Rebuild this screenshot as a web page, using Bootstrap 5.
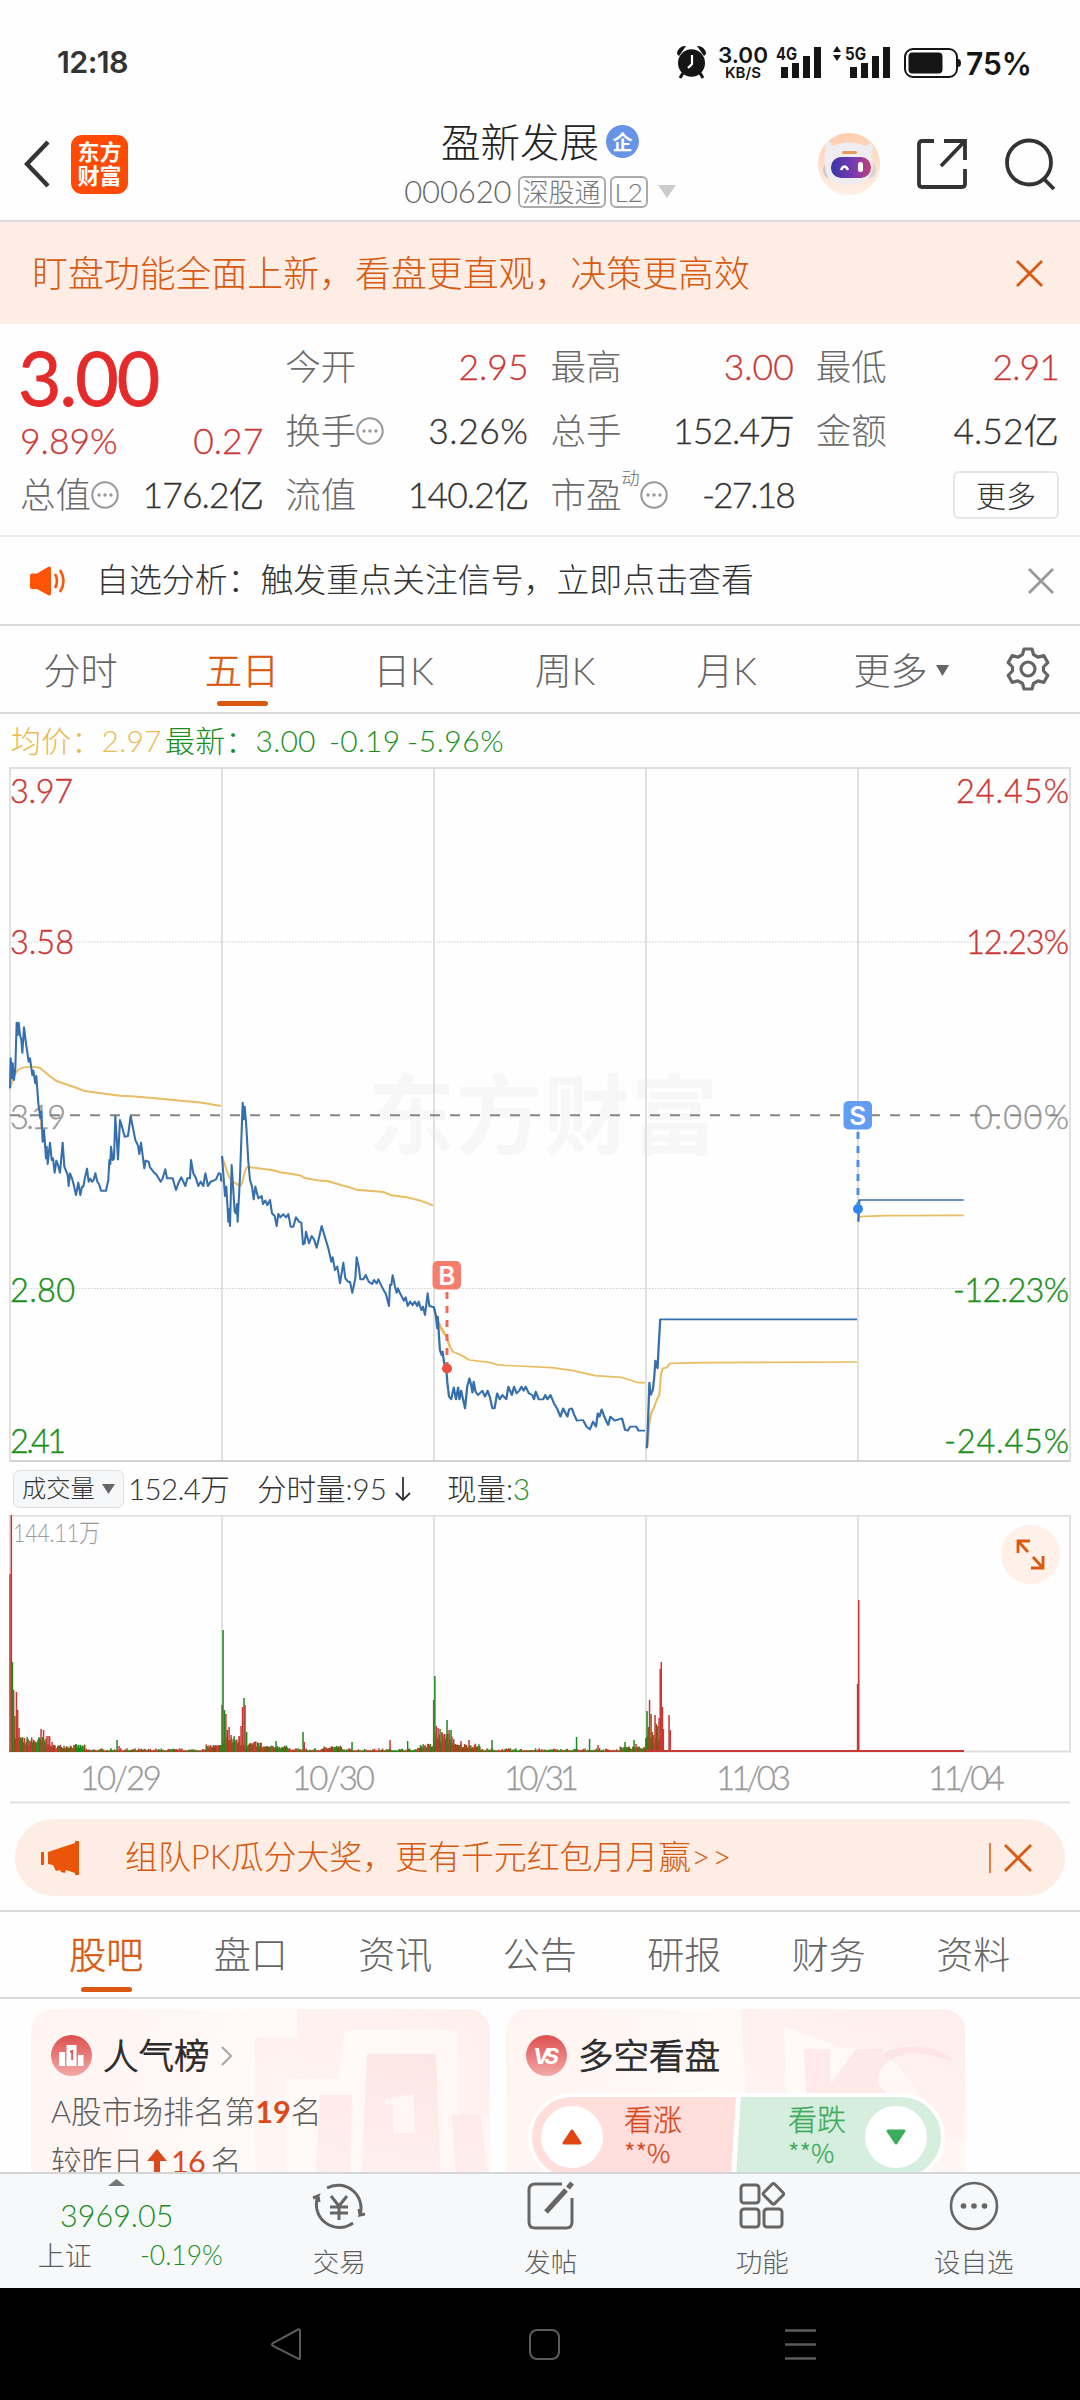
<!DOCTYPE html>
<html lang="zh-CN">
<head>
<meta charset="utf-8">
<meta name="viewport" content="width=device-width, initial-scale=1">
<title>盈新发展 000620</title>
<link rel="stylesheet" href="https://cdn.jsdelivr.net/npm/bootstrap@5.3.0/dist/css/bootstrap.min.css">
<style>
:root{--up:#cb3836;--down:#1a8f1a;--brand:#d8590f;--ink:#333;--soft:#666;--rule:#d8d8d8}
body{width:1080px;height:2400px;margin:0;overflow:hidden;background:#fefefe;color:var(--ink);font-family:Lato,"Noto Sans CJK SC",sans-serif;font-weight:300;line-height:1}
svg{display:block;flex:none}
svg text{font-family:Lato,"Noto Sans CJK SC",sans-serif;font-weight:300}
.c-up{color:var(--up)}.c-down{color:var(--down)}.c-brand{color:var(--brand)}.c-soft{color:var(--soft)}
.statusbar{height:124px;padding:0 46px 0 57px}
.clock{font:600 30.5px/1 Inter,sans-serif;letter-spacing:-.6px}
.topbar{height:98px;border-bottom:2px solid #d9dbd8;padding:0 24px 16px}
.side-l,.side-r{width:240px}
.app-logo{width:57px;height:59px;border-radius:11px;background:#ff4a05;color:#fff;font-weight:700;font-size:22px;line-height:24px;margin-left:21px}
.stock-name{font-size:39.5px;height:44px;color:#222}
.corp{width:33px;height:33px;border-radius:50%;background:#6794e6;color:#fff;font-size:20px;font-weight:700;margin-left:7px}
.stock-code{font-size:31px;height:34px;color:#666;gap:6px;letter-spacing:-.1px;margin-top:11px}
.tagbox{border:2px solid #aaa;border-radius:6px;height:32px;padding:0 3px;font-size:26px;color:#777;letter-spacing:0}
.tip{height:102px;background:#fdede4;padding:2px 36px 0 32px;font-size:35.9px}
.quote{height:213px;padding:11px 21px 0 20px;gap:22px;font-size:35.5px;border-bottom:2px solid #ececec}
.qcol{width:243.3px}
.qrow{height:64px}
.qrow .c-soft{color:#6b6b6b}
.num{font-size:35.5px;-webkit-text-stroke:.3px currentColor}
.tight{letter-spacing:-.9px}
.bigprice{font-size:75px;font-weight:400;color:#e42a2a;height:84px;letter-spacing:-2px;margin-left:-2px;-webkit-text-stroke:.8px #e42a2a}
.more-btn{width:106px;height:48px;border:2px solid #e6e6e6;border-radius:6px;font-size:30px}
.notice{height:89px;padding:0 26px 0 28px;border-bottom:2px solid var(--rule);font-size:32.9px}
.ktabs{height:88px;border-bottom:2px solid var(--rule);font-size:37px;color:#666}
.ktab{width:162px;height:88px;margin-left:-.5px}
.on{color:var(--brand);-webkit-text-stroke:.5px var(--brand)}
.ktabs .on::after,.ntabs .on::after{content:"";position:absolute;bottom:8px;left:50%;width:51px;height:5px;margin-left:-25px;border-radius:3px;background:var(--brand)}
.legend-row{height:53px;padding:0 0 2px 11px;font-size:30px;white-space:pre;letter-spacing:.2px}
.vhead{height:53px;padding-left:13px;font-size:29.5px}
.chip{width:111px;height:38px;background:#f6f7f9;border:1px solid #dedfe2;border-radius:7px;font-size:24.3px;padding-left:8px;margin-right:4px}
.promo{margin:15px 15px 14px;height:77px;border-radius:39px;background:#fdede4;font-size:32.9px;padding:0 32px 0 25px}
.ntabs{height:89px;border-top:2px solid var(--rule);border-bottom:2px solid var(--rule);padding:0 34px;font-size:37px;color:#666}
.ntab{width:144.5px}
.ntabs .on::after{bottom:5px}
.feed{height:173px;overflow:hidden;padding:10px 0 0 31px;gap:16px}
.fcard{width:459px;height:230px;border-radius:22px;background:linear-gradient(110deg,#fff4f2,#fffaf8 50%,#fff6f4);overflow:hidden;padding:26px 20px}
.fcard>svg.deco{position:absolute;left:0;top:0}
.ftitle{font-size:35.5px;color:#2b2b2b;height:41px;gap:11px;-webkit-text-stroke:.9px #2b2b2b}
.fline{font-size:30.7px;color:#5d5d5d;height:50px}
.fline b{color:#dc4a1b;font-weight:700}
.poll{width:417px;height:88px;border:4px solid #fff;border-radius:46px;margin:17px 0 0 2px;overflow:hidden;background:linear-gradient(93.5deg,#ffdedb 0 203px,#fff 204px 208px,#d6eedd 209px)}
.dot-c{width:62px;height:62px;border-radius:50%;background:#fff}
.vote{font-size:29px;line-height:32px;-webkit-text-stroke:.3px currentColor}
.vote-pct{font-family:"Noto Sans CJK SC",sans-serif;font-size:26px;display:block;line-height:32px}
.toolbar{height:116px;background:#f6f8fa;border-top:2px solid #d3d5d9;font-size:26.5px;color:#5d5d5d}
.tool{width:211.5px;padding-top:7px;gap:18px}
.index-box{width:233.5px;padding-top:5px}
.sysnav{height:112px;background:#000}
</style>
</head>
<body>
<header class="statusbar d-flex align-items-center justify-content-between">
  <span class="clock">12:18</span>
  <svg width="360" height="44" viewBox="674 40 360 44" fill="#151515">
    <path d="M677 54a8 8 0 0 1 9-8l-7 10zM706 54a8 8 0 0 0-9-8l7 10z"/><ellipse cx="691.500" cy="63" rx="13.500" ry="13.800"/><path d="M683 73l-3 5M700 73l3 5" stroke="#151515" stroke-width="3"/><path d="M692 55v9l-4 4" stroke="#fff" stroke-width="2.200" fill="none"/>
    <text x="718" y="62.500" font-size="22" textLength="50" lengthAdjust="spacingAndGlyphs" style="font-family:Inter;font-weight:600">3.00</text><text x="725" y="77.500" font-size="15" textLength="36" lengthAdjust="spacingAndGlyphs" style="font-family:Inter;font-weight:600">KB/S</text><text x="776" y="60" font-size="17" textLength="21" lengthAdjust="spacingAndGlyphs" style="font-family:Inter;font-weight:700">4G</text><text x="845" y="60" font-size="17" textLength="21" lengthAdjust="spacingAndGlyphs" style="font-family:Inter;font-weight:700">5G</text><text x="966" y="74.500" font-size="31" textLength="66" lengthAdjust="spacingAndGlyphs" style="font-family:Inter;font-weight:600">75%</text>
    <path d="M781 67h7v11h-7zM792 63h7v15h-7zM803 56h7v22h-7zM814 47h7v31h-7zM850 67h7v11h-7zM861 63h7v15h-7zM872 56h7v22h-7zM883 47h7v31h-7z"/>
    <path d="M833 52l4-6 4 6zM833 55l4 6 4-6z"/>
    <rect x="905" y="49" width="52" height="28" rx="8" fill="none" stroke="#151515" stroke-width="2"/><rect x="908.500" y="52.500" width="34" height="21" rx="4"/><path d="M958 59q3 0 3 4t-3 4z"/>
  </svg>
</header>

<nav class="topbar d-flex align-items-center justify-content-between">
  <div class="side-l d-flex align-items-center">
    <svg width="26" height="48" viewBox="0 0 26 48" fill="none" stroke="#333" stroke-width="4.400"><path d="M24 2L3 24l21 22"/></svg>
    <div class="app-logo d-flex flex-column align-items-center justify-content-center"><span>东方</span><span>财富</span></div>
  </div>
  <div class="d-flex flex-column align-items-center">
    <div class="stock-name d-flex align-items-center">盈新发展<span class="corp d-flex align-items-center justify-content-center">企</span></div>
    <div class="stock-code d-flex align-items-center">000620<span class="tagbox d-flex align-items-center">深股通</span><span class="tagbox d-flex align-items-center" style="margin-left:-2px">L2</span>
      <svg class="ms-1" width="18" height="13" viewBox="0 0 18 13"><path d="M0 0h18L9 13z" fill="#ccc"/></svg></div>
  </div>
  <div class="side-r d-flex align-items-center justify-content-end">
    <svg width="62" height="62" viewBox="0 0 62 62">
      <defs><linearGradient id="rb" x2="0" y2="1"><stop stop-color="#ffcdb0"/><stop offset="1" stop-color="#fff0e7"/></linearGradient><linearGradient id="rf"><stop stop-color="#3b35a8"/><stop offset=".6" stop-color="#7d3bb0"/><stop offset="1" stop-color="#c0436f"/></linearGradient></defs>
      <circle cx="31" cy="31" r="31" fill="url(#rb)"/><ellipse cx="11" cy="37" rx="6" ry="8" fill="#cfc8cc"/><ellipse cx="52" cy="37" rx="6" ry="8" fill="#d9d3d6"/>
      <path d="M8 10q3-5 6 3 18-7 34 0l5-4q4 8 0 14 5 13-3 22-8 8-21 7Q11 51 8 39q-3-12 0-29z" fill="#efedf0"/><rect x="13" y="24" width="40" height="21" rx="10" fill="url(#rf)"/><path d="M23 37q3.500-7 7 0" fill="none" stroke="#fff" stroke-width="2.500"/><rect x="40" y="29" width="5" height="10" rx="2.500" fill="#fff"/><rect x="24" y="18" width="15" height="3" rx="1.500" fill="#e99a5c"/>
    </svg>
    <svg style="margin-left:37px" width="50" height="52" viewBox="0 0 50 52" fill="none" stroke="#333" stroke-width="3.800"><path d="M17 3H5q-3 0-3 3v40q0 3 3 3h40q3 0 3-3V31M27 3h21v19M47 4L24 28"/></svg>
    <svg style="margin-left:37px" width="52" height="52" viewBox="0 0 52 52" fill="none" stroke="#333" stroke-width="3.800"><circle cx="25" cy="24.500" r="22"/><path d="M39 40l11 11"/></svg>
  </div>
</nav>

<div class="tip c-brand d-flex align-items-center justify-content-between"><span>盯盘功能全面上新，看盘更直观，决策更高效</span>
  <svg width="30" height="30" viewBox="0 0 30 30" stroke="#d8590f" stroke-width="2.800"><path d="M3 2l25 25M28 2L3 27"/></svg></div>

<section class="quote d-flex">
  <div class="qcol"><div class="bigprice d-flex align-items-center">3.00</div>
    <div class="num c-up d-flex justify-content-between align-items-center" style="height:44px"><span>9.89%</span><span>0.27</span></div>
    <div class="qrow d-flex justify-content-between align-items-center"><span class="c-soft d-flex align-items-center">总值<svg width="28" height="28"><use href="#dots"/></svg></span><span class="num tight">176.2亿</span></div></div>
  <div class="qcol">
    <div class="qrow d-flex justify-content-between align-items-center"><span class="c-soft">今开</span><span class="num c-up">2.95</span></div>
    <div class="qrow d-flex justify-content-between align-items-center"><span class="c-soft d-flex align-items-center">换手<svg width="28" height="28"><use href="#dots"/></svg></span><span class="num" style="letter-spacing:.5px">3.26%</span></div>
    <div class="qrow d-flex justify-content-between align-items-center"><span class="c-soft">流值</span><span class="num tight">140.2亿</span></div></div>
  <div class="qcol">
    <div class="qrow d-flex justify-content-between align-items-center"><span class="c-soft">最高</span><span class="num c-up">3.00</span></div>
    <div class="qrow d-flex justify-content-between align-items-center"><span class="c-soft">总手</span><span class="num tight">152.4万</span></div>
    <div class="qrow d-flex justify-content-between align-items-center"><span class="c-soft d-flex align-items-center">市盈<span style="font-size:18px;margin-bottom:34px">动</span><svg width="28" height="28"><use href="#dots"/></svg></span><span class="num" style="letter-spacing:-2px">-27.18</span></div></div>
  <div class="qcol">
    <div class="qrow d-flex justify-content-between align-items-center"><span class="c-soft">最低</span><span class="num c-up tight">2.91</span></div>
    <div class="qrow d-flex justify-content-between align-items-center"><span class="c-soft">金额</span><span class="num">4.52亿</span></div>
    <div class="qrow d-flex justify-content-end align-items-center"><span class="more-btn d-flex align-items-center justify-content-center">更多</span></div></div>
  <svg width="0" height="0" class="position-absolute"><symbol id="dots" viewBox="0 0 26 26"><circle cx="13" cy="13" r="11.800" fill="none" stroke="#999" stroke-width="1.900"/><g fill="#999"><circle cx="7.500" cy="13" r="1.600"/><circle cx="13" cy="13" r="1.600"/><circle cx="18.500" cy="13" r="1.600"/></g></symbol></svg>
</section>

<div class="notice d-flex align-items-center">
  <svg width="39" height="30" viewBox="0 0 39 30"><path d="M2 9.500q0-2 2-2h5L20 1q3-1.500 3 1.500v25q0 3-3 1.500L9 23H4q-2 0-2-2z" fill="#ff5405"/><path d="M27 8q4 7 0 14M32 4q7 11 0 22" fill="none" stroke="#ff5405" stroke-width="2.600"/></svg>
  <span class="flex-grow-1" style="margin-left:29px">自选分析：触发重点关注信号，立即点击查看</span>
  <svg width="26" height="26" viewBox="0 0 26 26" stroke="#999" stroke-width="2.800"><path d="M1 1l24 24M25 1L1 25"/></svg>
</div>

<div class="ktabs d-flex">
  <div class="ktab d-flex align-items-center justify-content-center">分时</div>
  <div class="ktab on position-relative d-flex align-items-center justify-content-center">五日</div>
  <div class="ktab d-flex align-items-center justify-content-center">日K</div>
  <div class="ktab d-flex align-items-center justify-content-center">周K</div>
  <div class="ktab d-flex align-items-center justify-content-center">月K</div>
  <div class="ktab d-flex align-items-center justify-content-center" style="padding-left:26px;gap:8px">更多<svg width="13" height="11"><path d="M0 0h13L6.500 11z" fill="#666"/></svg></div>
  <div class="d-flex align-items-center" style="margin-left:37px">
    <svg width="44" height="44" viewBox="0 0 44 44" fill="none" stroke="#666" stroke-width="3.200" stroke-linejoin="round"><path d="M18 2h8l1.500 5.500 4.500 2.600 5.800-1.500 4 7L37.500 20v4l4.300 4.400-4 7-5.800-1.500-4.500 2.600L26 42h-8l-1.500-5.500-4.500-2.600-5.800 1.500-4-7L6.500 24v-4l-4.300-4.400 4-7 5.800 1.500 4.500-2.600z"/><circle cx="22" cy="22" r="7"/></svg></div>
</div>

<div class="legend-row d-flex align-items-center"><span style="color:#e9bb52;width:154px">均价：2.97</span><span class="c-down" style="width:164px">最新：3.00</span><span class="c-down" style="width:78px">-0.19</span><span class="c-down" style="letter-spacing:.6px">-5.96%</span></div>

<svg width="1080" height="695" viewBox="0 767 1080 695">
  <text x="368" y="1148" font-size="87" textLength="350" fill="#f7f7f7" style="font-weight:700">东方财富</text>
  <g fill="none" stroke="#dedede" stroke-width="1.800"><path d="M10 768H1070V1461H10zM222 768V1461M434 768V1461M646 768V1461M858 768V1461"/><path d="M10 1461H1070" stroke="#d2d2d2" stroke-width="2"/></g>
  <path d="M10 942H1070M10 1288.500H1070" stroke="#d0d0d0" stroke-width="1" stroke-dasharray="1.500 1.500"/>
  <g font-size="32.500" stroke-width=".4">
    <g fill="#cb3836" stroke="#cb3836"><text x="10" y="803" textLength="63">3.97</text><text x="1069" y="803" text-anchor="end" textLength="113">24.45%</text><text x="10" y="954" textLength="64">3.58</text><text x="1069" y="954" text-anchor="end" textLength="103">12.23%</text></g>
    <g fill="#999" stroke="#999"><text x="10" y="1129" textLength="56">3.19</text><text x="1069" y="1129" text-anchor="end" textLength="95">0.00%</text></g>
    <g fill="#1a8f1a" stroke="#1a8f1a"><text x="10" y="1302" textLength="65">2.80</text><text x="1069" y="1302" text-anchor="end" textLength="116">-12.23%</text><text x="10" y="1453" textLength="56">2.41</text><text x="1069" y="1453" text-anchor="end" textLength="125">-24.45%</text></g>
  </g>
  <path d="M10 1115.300H1058" stroke="#858585" stroke-width="2" stroke-dasharray="10 10"/>
  <g fill="none" stroke-linejoin="round">
   <g transform="translate(0 980) scale(.33333)">
    <g stroke="#e9bd63" stroke-width="6"><path d="M30 325C38 300 40 285 54 270C70 259 100 258 120 264C140 280 150 292 170 303C200 315 220 318 250 332C290 338 320 342 360 347C440 350 500 358 560 364C610 368 640 374 663 377"/><path d="M666 528C675 555 685 590 692 600C705 610 715 616 723 616C732 600 733 565 742 561L820 571L840 577L900 586L915 594L950 601L985 604L1030 617L1050 622L1070 629L1150 636L1175 646L1220 652L1262 662L1300 677M1302 985C1310 1020 1320 1040 1335 1060L1350 1100"/></g>
    <path stroke="#366fad" stroke-width="6.200" d="M30 325L32 235 36 295 38 250 42 300 46 265 50 128 53 165 56 128 60 165 64 180 67 218 72 142 78 190 86 245 90 235 97 285 100 272 106 310 109 288 115 370 121 415 124 395 128 485 132 450 138 535 140 500 143 552 150 488 155 540 159 535 164 578 169 542 174 555 180 578 188 488 193 560 199 575 203 585 206 618 210 580 216 595 222 618 228 645 235 608 241 645 246 620 250 620 255 592 261 566 266 605 271 596 276 605 281 600 286 580 292 605 297 612 303 632 318 632 325 600 328 540 331 552 333 500 338 540 342 535 346 408 354 538 360 420 366 440 374 470 384 468 392 408 400 450 406 480 414 497 418 522 423 488 433 565 437 542 446 545 450 562 460 575 470 585 482 605 488 595 496 568 501 595 518 595 528 630 535 610 544 592 556 618 562 595 570 595 573 540 580 580 588 595 595 618 602 605 610 618 616 580 624 618 632 605 640 602 648 598 656 580 662 582 664 605M666 528L675 648 679 620 685 725 687 688 690 738 695 555 704 695 708 700 711 672 713 725 720 590 728 368 731 418 734 380 738 425 745 545 750 600 756 620 761 658 766 620 775 655 785 648 789 672 796 662 802 675 810 660 816 700 824 708 830 738 835 702 841 712 850 703 858 712 865 702 872 740 880 740 888 712 897 725 904 728 909 793 914 790 918 755 927 790 935 768 942 778 950 803 956 778 965 738 976 775 985 805 994 845 998 832 1005 870 1012 860 1020 910 1030 848 1036 895 1044 905 1050 905 1057 938 1066 895 1070 832 1077 865 1081 898 1090 898 1097 885 1106 905 1116 912 1122 900 1130 910 1135 898 1148 925 1158 943 1167 978 1170 915 1174 915 1178 886 1185 920 1190 938 1194 925 1200 940 1212 962 1217 952 1223 978 1230 965 1238 975 1244 965 1252 978 1256 965 1264 990 1269 980 1275 1005 1283 940 1288 978 1302 982"/>
   </g>
   <g transform="translate(400 1050) scale(.43367 .33333)">
    <path stroke="#e9bd63" stroke-width="5" d="M78 775L88 820 96 840 107 860 115 890 122 905 140 915 160 930 210 938 220 943 240 946 350 953 400 962 420 968 450 977 510 982 550 998 565 998M571 1190L575 1120 579 1090 585 1075 592 1050 598 1035 602 970 606 955 616 952 622 940 700 938 1054 936M1059 500L1120 497 1300 496"/>
    <path stroke="#366fad" stroke-width="5.200" d="M78 770L83 800 86 835 87 800 92 900 96 915 98 905 102 940 107 960 109 995 113 1040 118 1048 124 1012 129 1048 134 1012 137 1048 141 1022 150 1075 155 1010 160 985 164 1005 167 1028 170 995 174 1025 180 1035 190 1022 196 1040 202 1022 207 1040 213 1075 218 1075 224 1030 230 1048 236 1035 245 1048 250 1010 258 1035 263 1010 269 1030 275 1022 280 1010 285 1022 290 1010 297 1030 305 1035 309 1048 313 1025 320 1048 330 1048 335 1035 340 1048 347 1035 355 1060 362 1075 370 1100 376 1075 382 1090 386 1100 390 1078 396 1075 402 1095 408 1112 422 1110 430 1130 438 1138 445 1115 452 1130 456 1090 460 1100 465 1078 471 1100 480 1125 485 1100 495 1112 512 1105 519 1140 525 1142 531 1130 545 1130 550 1142 565 1142M569 1195L571 1150 575 998 578 1035 583 1020 586 985 589 932 594 955 596 900 600 808H1054M1057 515L1059 450H1300"/>
   </g>
  </g>
  <g stroke-width="3" stroke-dasharray="7 7"><path d="M447 1292V1364" stroke="#ee6a58"/><path d="M858 1132V1204" stroke="#4b90e8"/></g>
  <circle cx="447" cy="1368.500" r="5" fill="#e9503f"/><circle cx="858" cy="1209" r="5" fill="#3485ee"/>
  <rect x="432.500" y="1261" width="28.500" height="28.500" rx="5" fill="#f67c6b"/><rect x="843.500" y="1101" width="28.500" height="28.500" rx="5" fill="#629df2"/>
  <g fill="#fff" font-size="26" text-anchor="middle"><text x="446.800" y="1285" style="font-family:Inter;font-weight:600">B</text><text x="857.800" y="1125" style="font-family:Inter;font-weight:600">S</text></g>
</svg>

<div class="vhead d-flex align-items-center"><span class="chip d-flex align-items-center">成交量<svg style="margin-left:7px" width="13" height="10"><path d="M0 0h13L6.500 10z" fill="#666"/></svg></span><span style="width:129px;letter-spacing:-.6px">152.4万</span><span class="d-flex align-items-center" style="width:190px">分时量:95<svg style="margin-left:7px" width="18" height="26" fill="none" stroke="#333" stroke-width="1.800"><path d="M9 1v23M2 17l7 7 7-7"/></svg></span><span>现量:<span class="c-down">3</span></span></div>

<svg width="1080" height="289" viewBox="0 1515 1080 289">
  <path d="M10 1515.500H1070V1751.500H10zM222 1515V1751M434 1515V1751M646 1515V1751M858 1515V1751" fill="none" stroke="#dedede" stroke-width="1.800"/>
  <g id="bars"></g>
  <text x="13" y="1542" font-size="25" textLength="87" lengthAdjust="spacingAndGlyphs" fill="#999">144.11万</text>
  <g fill="#999" stroke="#999" stroke-width=".3" font-size="33"><text x="80" y="1790" textLength="82">10/29</text><text x="292" y="1790" textLength="83">10/30</text><text x="504" y="1790" textLength="75">10/31</text><text x="716" y="1790" textLength="75">11/03</text><text x="928" y="1790" textLength="77">11/04</text></g>
  <path d="M10 1802.500H1070" stroke="#e2e2e2" stroke-width="2"/>
  <circle cx="1030.500" cy="1554.500" r="29.500" fill="#fff0e8"/><path d="M1018 1553v-12h12M1018 1541l10 11M1043 1556v12h-12M1043 1568l-10-11" fill="none" stroke="#d8590f" stroke-width="2.800"/>
</svg>

<div class="promo c-brand d-flex align-items-center">
  <svg width="39" height="34" viewBox="0 0 39 34" fill="#ea5507"><path d="M1 11h3v13H1zM8 11Q20 7 35 2V0h4v34h-4v-2l-9-3-1 3-4-1-1-2-4 1-3-6-5-1z"/></svg>
  <span class="flex-grow-1" style="margin-left:46px">组队PK瓜分大奖，更有千元红包月月赢<span style="letter-spacing:2px">&gt;&gt;</span></span>
  <svg width="44" height="32" viewBox="0 0 44 32" stroke="#d8590f"><path d="M1 1v30" stroke-width="1.500"/><path d="M16 3l26 26M42 3L16 29" stroke-width="2.800"/></svg>
</div>

<div class="ntabs d-flex">
  <div class="ntab on position-relative d-flex align-items-center justify-content-center">股吧</div><div class="ntab d-flex align-items-center justify-content-center">盘口</div><div class="ntab d-flex align-items-center justify-content-center">资讯</div><div class="ntab d-flex align-items-center justify-content-center">公告</div><div class="ntab d-flex align-items-center justify-content-center">研报</div><div class="ntab d-flex align-items-center justify-content-center">财务</div><div class="ntab d-flex align-items-center justify-content-center">资料</div>
</div>

<main class="feed d-flex">
  <article class="fcard position-relative">
    <svg class="deco" width="459" height="230"><defs><linearGradient id="pk" x2="0" y2="1"><stop stop-color="#f9c9c9" stop-opacity=".38"/><stop offset="1" stop-color="#ffe4e4" stop-opacity=".25"/></linearGradient><linearGradient id="rd" x2="0" y2="1"><stop stop-color="#dc4f4f"/><stop offset="1" stop-color="#f3a9a6"/></linearGradient></defs>
      <path d="M224 28H266V0H459V106H428L426 21H314L308 70H255V230H224z" fill="url(#pk)" opacity=".45"/>
      <path d="M289 86H321L317 230H281zM336 45H405L412 230H328zM421 106H450L459 190V230H428z" fill="url(#pk)"/><path d="M354 90L383 85V124H362V95H354z" fill="#fff6f5"/></svg>
    <div class="ftitle position-relative d-flex align-items-center"><svg width="41" height="41" viewBox="0 0 41 41"><circle cx="20.500" cy="20.500" r="20.500" fill="url(#rd)"/><path d="M8 17h6v14H8zM15.500 10h10v21h-10zM27 20h5.500v11H27z" fill="#fff"/><path d="M19 17l2.200-1v9" fill="none" stroke="#d95f5c" stroke-width="2"/></svg><span>人气榜</span><svg width="12" height="20" viewBox="0 0 12 20" fill="none" stroke="#aaa" stroke-width="2.200"><path d="M1 1l9 9-9 9"/></svg></div>
    <div class="fline position-relative d-flex align-items-center" style="margin-top:11px">A股市场排名第<b>19</b>名</div>
    <div class="fline position-relative d-flex align-items-center">较昨日<svg class="ms-1" width="20" height="26"><path d="M10 0L20 12H13V26H7V12H0z" fill="#dc4a1b"/></svg><b class="ms-1" style="font-weight:400;letter-spacing:-1px">16</b><span style="margin-left:6px">名</span></div>
  </article>
  <article class="fcard position-relative">
    <svg class="deco" width="459" height="230"><path d="M235 0H459V130H430Q400 30 340 40L278 18 285 230H248z" fill="url(#pk)" opacity=".5"/><path d="M298 40H324V76L350 40H378L322 120H302zM444 52Q425 44 405 44Q372 50 372 72Q374 84 398 92Q420 98 424 112H392L360 96 346 120H340Q352 40 400 38Q430 36 446 50z" fill="#f9d5d4" opacity=".4"/></svg>
    <div class="ftitle position-relative d-flex align-items-center"><svg width="41" height="41" viewBox="0 0 41 41"><circle cx="20.500" cy="20.500" r="20.500" fill="url(#rd)"/><text x="7" y="29" font-size="22" textLength="26" fill="#fff" stroke="none" style="font-family:Inter;font-weight:700;font-style:italic;-webkit-text-stroke:0">VS</text></svg><span>多空看盘</span></div>
    <div class="poll position-relative d-flex align-items-center">
      <span class="dot-c d-flex align-items-center justify-content-center" style="margin-left:9px"><svg width="20" height="16"><path d="M10 2L18 14H2z" fill="#e24412" stroke="#e24412" stroke-width="3" stroke-linejoin="round"/></svg></span>
      <span class="vote" style="color:#d9481c;margin-left:21px;margin-top:-3px">看涨<span class="vote-pct">**%</span></span>
      <span class="vote" style="color:#3fab60;margin-left:106px;margin-top:-3px">看跌<span class="vote-pct">**%</span></span>
      <span class="dot-c d-flex align-items-center justify-content-center" style="margin-left:19px"><svg width="20" height="16"><path d="M10 14L18 2H2z" fill="#3aad5e" stroke="#3aad5e" stroke-width="3" stroke-linejoin="round"/></svg></span>
    </div>
  </article>
</main>

<footer class="toolbar d-flex">
  <div class="index-box d-flex flex-column align-items-center"><svg style="margin-bottom:14px" width="17" height="7"><path d="M0 7L8.500 0 17 7z" fill="#777"/></svg><span class="c-down" style="font-size:30.500px">3969.05</span>
    <span class="d-flex justify-content-between" style="width:185px;margin:11px 0 0 27px"><span style="font-size:27px">上证</span><span class="c-down">-0.19%</span></span></div>
  <div class="tool d-flex flex-column align-items-center"><svg width="56" height="50" viewBox="0 0 56 50" fill="none" stroke="#666" stroke-width="3"><path d="M16 7A23 23 0 0 1 49 34l5-1M49 34l-1-6"/><path d="M42 42A23 23 0 0 1 7 15l-5 2M7 15l1 6"/><path d="M20 15l8 10 8-10M28 25v14M19 26h18M19 32h18"/></svg>交易</div>
  <div class="tool d-flex flex-column align-items-center"><svg width="48" height="50" viewBox="0 0 48 50" fill="none" stroke="#666" stroke-width="3"><path d="M35 3H8Q2 3 2 9v32q0 6 6 6h31q6 0 6-6V17"/><path d="M19 31L39 9" stroke-width="5"/><path d="M41 7l4-5" stroke-width="5"/></svg>发帖</div>
  <div class="tool d-flex flex-column align-items-center"><svg width="46" height="50" viewBox="0 0 46 50" fill="none" stroke="#666" stroke-width="3"><rect x="2" y="4" width="18" height="18" rx="3"/><rect x="2" y="28" width="18" height="18" rx="3"/><rect x="25" y="28" width="18" height="18" rx="3"/><rect x="26.500" y="5" width="15.500" height="15.500" rx="2" transform="rotate(45 34.200 13)"/></svg>功能</div>
  <div class="tool d-flex flex-column align-items-center"><svg width="50" height="50" viewBox="0 0 50 50" fill="none" stroke="#666" stroke-width="2.600"><circle cx="25" cy="25" r="23"/><g fill="#666" stroke="none"><circle cx="14.500" cy="25" r="2.800"/><circle cx="25" cy="25" r="2.800"/><circle cx="35.500" cy="25" r="2.800"/></g></svg>设自选</div>
</footer>
<div class="sysnav">
  <svg width="1080" height="112" viewBox="0 2288 1080 112" fill="none" stroke="#5c5c5c" stroke-width="2"><path d="M300 2331v27q0 2-2 .500L273 2346q-2-1.500 0-3l25-13.500q2-1 2 1.500z"/><rect x="530" y="2330" width="29" height="29" rx="7"/><path d="M785 2330.500h31M785 2344.500h31M785 2358.500h31" stroke-width="2.600"/></svg>
</div>

<script>
// Volume bars: [x, height, colour]; quiet minutes in between get small seeded bars.
const R='#cc3632',G='#1b8a1b',B='#8a4f14';
const peaks=[[10,178,R],[11.3,237,R],[12.4,90,G],[13.6,62,R],[14.8,36,B],[16.4,60,R],[17.6,42,R],[19,24,R],[20.5,14,G],[41,23,R],[43.5,22,R],[47,16,R],[49,16,R],[52,10,R],[76,8,G],[117,12,G],[119,6,R],
[222,47,R],[223,122,G],[224.4,42,G],[225.8,38,R],[227.3,22,B],[229,25,R],[231,17,R],[239,16,R],[241,26,R],[242.5,45,R],[244,54,G],[245,47,R],[246.6,20,G],[276,11,G],[303,20,G],[304.2,10,R],[352,10,G],[390,12,R],[407.6,11,G],
[433.6,52,R],[434.8,76,G],[436.3,26,R],[438,24,R],[440,23,G],[442,20,R],[444,18,R],[447,32,G],[449,22,R],[451,22,G],[461,11,R],[469,12,R],[492,12,G],[576.5,15,G],[589.5,13,G],[598,7,R],[625,10,G],[634,12,G],[636,8,R],
[645.8,14,G],[647,41,G],[648.4,25,B],[649.5,52,R],[651,38,B],[652.3,20,B],[653.8,17,R],[655,37,R],[656.3,28,B],[657.6,26,G],[659,34,R],[660.2,83,R],[661.2,90,R],[662.4,45,R],[663.3,23,R],[669,37,R],[670.2,22,R],
[857.5,68,R],[858.7,152,R]];
let s=7;const rnd=()=>(s=(s*16807)%2147483647)/2147483647;
const busy=[[11,50,14],[50,85,6],[206,222,6],[222,240,15],[240,262,9],[262,290,5],[324,342,5],[418,434,7],[434,454,18],[454,480,7],[620,646,4],[646,662,16]];
const list=[];
for(let x=10;x<664;x+=.9){const b=busy.find(v=>x>=v[0]&&x<v[1]);const m=b?b[2]:1.3;const t=rnd();list.push([x,1.5+m*(b?.35+t*.65:t*t*t*1.8),[R,G,B][Math.floor(rnd()*3)]]);}
document.getElementById('bars').innerHTML=list.concat(peaks).map(([x,h,c])=>`<rect x="${(x-.7).toFixed(1)}" y="${(1752-h).toFixed(1)}" width="1.500" height="${h.toFixed(1)}" fill="${c}"/>`).join('')+'<rect x="646" y="1750" width="318" height="2" fill="#c43a36"/>';
</script>
<script src="https://cdn.jsdelivr.net/npm/bootstrap@5.3.0/dist/js/bootstrap.bundle.min.js"></script>
</body>
</html>
